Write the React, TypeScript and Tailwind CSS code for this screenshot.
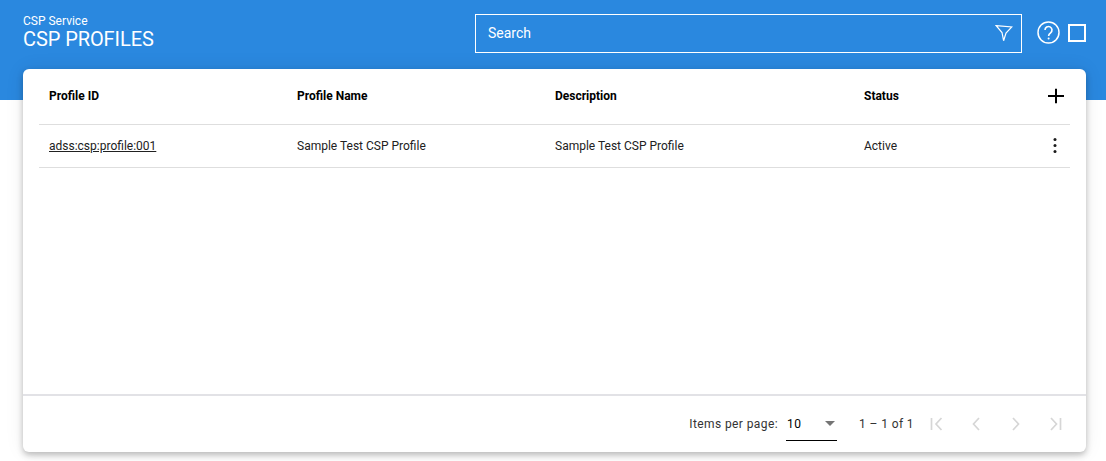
export default function App() {
  return (
    <div className="h-[461px] w-[1106px] overflow-hidden bg-white font-['Roboto',sans-serif]">
      <header className="flex h-[100px] items-start bg-[#2a88df] pl-[23px] pr-5 text-white">
        <div className="w-[452px] pt-[14px]">
          <div className="text-[12px] leading-[14px]">CSP Service</div>
          <div className="text-[20px] leading-[23px] tracking-[-0.08px]">CSP PROFILES</div>
        </div>
        <div className="mt-[14px] flex h-[39px] w-[547px] items-center justify-between border border-white pl-[12px] pr-[8px]">
          <span className="text-[14px]">Search</span>
          <svg width="18" height="18" viewBox="0 0 18 18" fill="none" stroke="white" strokeWidth="1.2" strokeLinejoin="miter">
            <path d="M1.2 0.7 L16.8 2 L11 8 L8.6 15.7 L7 7.5 Z" />
          </svg>
        </div>
        <div className="ml-[15px] mt-[21px] flex items-center gap-[8px]">
          <svg width="23" height="23" viewBox="0 0 23 23" fill="none" stroke="white">
            <circle cx="11.5" cy="11.5" r="10.5" strokeWidth="1.5" />
            <path d="M8 9 a3.5 3.5 0 1 1 5.6 2.8 c-1.3 1 -2 1.6 -2 3.2" strokeWidth="1.6" />
            <circle cx="11.6" cy="17.6" r="1" fill="white" stroke="none" />
          </svg>
          <div className="h-[18px] w-[18px] border-2 border-white" />
        </div>
      </header>
      <main className="relative ml-[23px] mr-5 mt-[-31px] flex h-[383px] flex-col rounded-[6px] bg-white shadow-[0_3px_6px_rgba(0,0,0,0.25),0_0_20px_rgba(0,0,0,0.07)]">
        <div className="flex-1 px-4">
          <div className="grid h-[56px] grid-cols-[248px_258px_309px_1fr_auto] items-center border-b border-[#dedede] pb-[2px] pl-[10px] text-[12px] font-bold text-black">
            <span>Profile ID</span>
            <span>Profile Name</span>
            <span>Description</span>
            <span>Status</span>
            <span className="flex justify-end pr-[6px]">
              <svg width="16" height="16" viewBox="0 0 16 16" fill="none" stroke="black" strokeWidth="2">
                <path d="M8 0.8 V15.2 M0 8 H16" />
              </svg>
            </span>
          </div>
          <div className="grid h-[43px] grid-cols-[248px_258px_309px_1fr_auto] items-center border-b border-[#dedede] pl-[10px] text-[12px] text-[#212121]">
            <span className="underline">adss:csp:profile:001</span>
            <span>Sample Test CSP Profile</span>
            <span>Sample Test CSP Profile</span>
            <span>Active</span>
            <span className="flex justify-end pr-[13px]">
              <svg width="4" height="16" viewBox="0 0 4 16" fill="#1a1a1a">
                <circle cx="2" cy="1.5" r="1.5" />
                <circle cx="2" cy="7.5" r="1.5" />
                <circle cx="2" cy="13.5" r="1.5" />
              </svg>
            </span>
          </div>
        </div>
        <footer className="flex h-[58px] items-center justify-end border-t-2 border-[#e2e2e6] pr-[23px] text-[12px] tracking-[0.4px] text-[#333]">
          <span>Items per page:</span>
          <div className="ml-[8px] mt-[2px] flex h-[32px] w-[51px] items-center justify-between border-b border-black pl-[1px] pr-[2px] pb-[2px] text-black">
            <span>10</span>
            <svg width="10" height="5" viewBox="0 0 10 5" fill="#757575"><path d="M0 0 H10 L5 5 Z" /></svg>
          </div>
          <span className="ml-[22px]">1 – 1 of 1</span>
          <div className="ml-[15px] flex items-center gap-[23.33px]">
            <Pager d="M2.5 2 V14 M12.5 2 L7 8 L12.5 14" />
            <Pager d="M11 2 L5.5 8 L11 14" />
            <Pager d="M5 2 L10.5 8 L5 14" />
            <Pager d="M13.5 2 V14 M4 2 L9.5 8 L4 14" />
          </div>
        </footer>
      </main>
    </div>
  );
}

function Pager({ d }: { d: string }) {
  return (
    <svg width="16" height="16" viewBox="0 0 16 16" fill="none" stroke="#d6d6d6" strokeWidth="1.7">
      <path d={d} />
    </svg>
  );
}
